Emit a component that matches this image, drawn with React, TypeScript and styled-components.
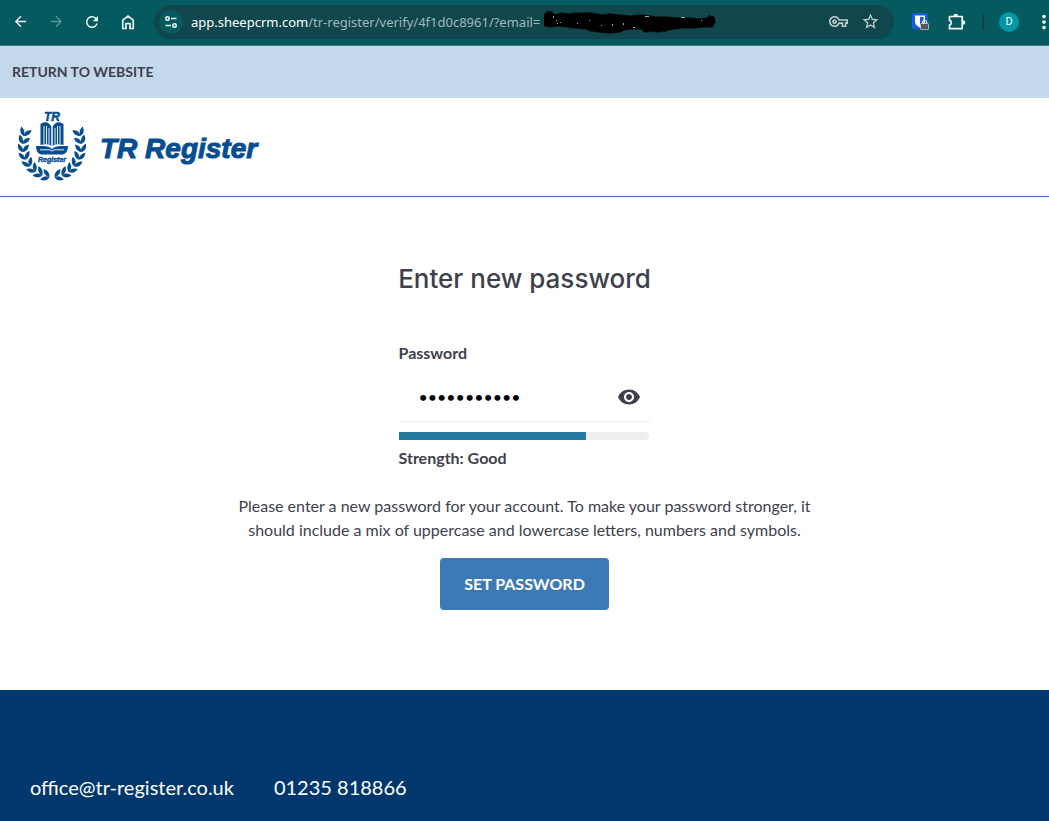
import React, { useState } from "react";
import styled, { createGlobalStyle } from "styled-components";
import {
  MdArrowBack,
  MdArrowForward,
  MdMoreVert,
  MdOutlineVpnKey,
  MdRefresh,
  MdRemoveRedEye,
  MdStarBorder,
} from "react-icons/md";

const Global = createGlobalStyle`
  *, *::before, *::after { box-sizing: border-box; }
  html, body, #root { margin: 0; min-height: 100%; }
  body {
    font-family: Lato, "Liberation Sans", sans-serif;
    font-size: 16px;
    line-height: 24px;
    color: #403f4c;
    background: #fff;
  }
`;

const Page = styled.div`
  min-height: 100vh;
  display: flex;
  flex-direction: column;
  overflow-x: hidden;
`;

/* ---------- browser toolbar ---------- */

const Toolbar = styled.div`
  display: flex;
  align-items: center;
  height: 46px;
  padding: 0 0 2px 8px;
  background: #045a5f;
  border-bottom: 1px solid #3f7f87;
`;

const NavGroup = styled.div`
  display: flex;
  align-items: center;
  gap: 12px;
  margin-right: 14px;
`;

const IconButton = styled.button<{ $dim?: boolean; $size?: number }>`
  display: flex;
  align-items: center;
  justify-content: center;
  flex: none;
  width: ${(p) => p.$size ?? 24}px;
  height: 24px;
  padding: 0;
  border: 0;
  background: none;
  color: ${(p) => (p.$dim ? "#5a9296" : "#e9f3f3")};
`;

const AddressBar = styled.div`
  flex: 1;
  min-width: 0;
  display: flex;
  align-items: center;
  height: 34px;
  padding: 0 12px 0 5px;
  border-radius: 17px;
  background: #10474d;
`;

const SiteInfo = styled(IconButton)`
  height: 24px;
  border-radius: 12px;
  background: #045a5f;
`;

const Url = styled.div`
  flex: 1;
  min-width: 0;
  display: flex;
  align-items: center;
  margin-left: 8px;
  overflow: hidden;
  white-space: nowrap;
  font-family: "Noto Sans", "Open Sans", sans-serif;
  font-size: 13px;
  line-height: 24px;
  color: #9fb9bb;
`;

const Host = styled.span`
  color: #fff;
`;

const AddressActions = styled.div`
  display: flex;
  gap: 8px;
`;

const AddressAction = styled(IconButton)`
  color: #c3cccd;
`;

const Extensions = styled.div`
  display: flex;
  align-items: center;
  gap: 12px;
  margin-left: 14px;
`;

const Divider = styled.span`
  width: 2px;
  height: 16px;
  margin: 0 3px 0 2px;
  background: #0b4247;
`;

const Avatar = styled.button`
  width: 20px;
  height: 20px;
  padding: 0;
  border: 0;
  border-radius: 50%;
  background: #0097a7;
  color: #fff;
  font: 11px/20px Roboto, sans-serif;
`;

const MenuButton = styled(IconButton)`
  margin-right: -8px;
`;

/* ---------- site ---------- */

const ReturnBar = styled.nav`
  display: flex;
  align-items: center;
  height: 52px;
  padding: 0 12px;
  background: #c4d8ec;
`;

const ReturnLink = styled.a`
  font-size: 14px;
  font-weight: 700;
  color: #403f4c;
  text-decoration: none;
`;

const Header = styled.header`
  display: flex;
  align-items: center;
  height: 99px;
  padding: 0 16px;
  border-bottom: 1px solid #3d7ab3;
`;

const Brand = styled.a`
  display: flex;
  align-items: center;
  gap: 12px;
  color: #074d92;
  text-decoration: none;
`;

const BrandName = styled.span`
  padding-top: 4px;
  font: italic 700 28px/32px "Liberation Sans", Arial, sans-serif;
  -webkit-text-stroke: 1px #074d92;
`;

const Main = styled.main`
  display: flex;
  flex-direction: column;
  align-items: center;
  padding: 64px 20px 80px;
`;

const Title = styled.h1`
  margin: 0;
  font: 500 26px/36px Inter, sans-serif;
  color: #403f4c;
`;

const Form = styled.form`
  display: flex;
  flex-direction: column;
  align-items: center;
  margin-top: 44px;
`;

const Field = styled.div`
  width: 252px;
`;

const Label = styled.label`
  display: block;
  font-weight: 700;
`;

const PasswordBox = styled.div`
  display: flex;
  align-items: center;
  height: 49px;
  margin-top: 8px;
  padding: 0 10px 0 20px;
  border-bottom: 1px solid #e8eef4;
  border-radius: 4px;
`;

const PasswordInput = styled.input`
  flex: 1;
  min-width: 0;
  padding: 0;
  border: 0;
  outline: 0;
  background: none;
  font: 16px/24px Lato, sans-serif;
  color: #000;
`;

const EyeButton = styled(IconButton)`
  color: #403f4c;
`;

const Meter = styled.div`
  width: 250px;
  height: 8px;
  margin-top: 10px;
  border-radius: 0 4px 4px 0;
  background: #eee;
  overflow: hidden;
`;

const MeterFill = styled.div`
  height: 100%;
  background: #24799e;
`;

const Strength = styled.p`
  margin: 6px 0 0;
  font-weight: 700;
`;

const Hint = styled.p`
  max-width: 580px;
  margin: 24px 0 0;
  text-align: center;
`;

const Submit = styled.button`
  height: 52px;
  margin-top: 16px;
  padding: 0 24px;
  border: 0;
  border-radius: 4px;
  background: #3d7ab5;
  color: #fff;
  font: 700 16px/24px Lato, sans-serif;
`;

const Footer = styled.footer`
  flex: 1;
  display: flex;
  gap: 40px;
  padding: 83px 30px 20px;
  background: #00386e;
`;

const FooterLink = styled.a`
  font-size: 20px;
  line-height: 28px;
  color: #fff;
  text-decoration: none;
`;

/* ---------- drawings ---------- */

const HomeIcon = () => (
  <svg width="16" height="16" viewBox="0 0 16 16" fill="none" stroke="currentColor" strokeWidth="1.7">
    <path d="M2.8 6.2 8 2l5.200 4.200V14.500H10V9.500H6v5H2.800z" />
  </svg>
);

const TuneIcon = () => (
  <svg width="14" height="14" viewBox="0 0 14 14" fill="none" stroke="#e9f3f3" strokeWidth="1.6">
    <circle cx="3.500" cy="3.500" r="1.700" />
    <path d="M7 3.500h5.500M1.500 10.500H7" />
    <circle cx="10.500" cy="10.500" r="1.700" />
  </svg>
);

const PuzzleIcon = () => (
  <svg width="20" height="20" viewBox="0 0 20 20" fill="none" stroke="#f3f8f8" strokeWidth="1.700" strokeLinejoin="round">
    <path d="M3.500 4.500h12.700v12.200H3.500v-3.800a2.300 2.300 0 0 0 0-4.500z" />
    <path d="M7.400 4a2.300 2.300 0 0 1 4.600 0zM17 8.200a2.300 2.300 0 0 1 0 4.600z" fill="#f3f8f8" stroke="none" />
  </svg>
);

const ShieldIcon = () => (
  <svg width="17" height="17" viewBox="0 0 17 17">
    <rect width="16" height="16" rx="1.500" fill="#175ddc" />
    <path d="M3 2.500h10v6.200c0 3-3 4.800-5 5.800-2-1-5-2.800-5-5.800z" fill="#fff" />
    <path d="M8 4h3.600v4.700c0 1.900-2 3.200-3.600 4.100z" fill="#175ddc" />
    <rect x="8.500" y="10.500" width="8" height="6.200" rx="1" fill="#555" stroke="#e8e8e8" strokeWidth=".7" />
    <path d="M10.500 10.500V9.300a2 2 0 0 1 4 0v1.200" fill="none" stroke="#ddd" strokeWidth="1.100" />
  </svg>
);

const RedactionMark = styled.svg`
  flex: none;
  margin-left: 4px;
`;

const Redaction = () => (
  <RedactionMark width="180" height="24" viewBox="0 0 180 24">
    <path
      d="M1 4 4 1.500 8 2l2 3 8-2 7 1 6-1 16 0 6 1 5 1 8-1 9 1 10 1 14-1 13 2 10 0 12 1 12 0 10 1 7-1 2-2 5 1 1 5-3 5-10 0-8 1-12 0-9 1-8 2-7 1-6-1-7 1-4-3-9 0-8 1-5 2-9 1-11-1-8-1-5-2-11-1-8-1-9-1-8 1-9-2-4 1-6-1z"
      fill="#000"
      stroke="#000"
      strokeWidth="1.500"
      strokeDasharray="2 1"
    />
    <path
      d="M9 6h1v2H9zM12 10h1v1h-1zM13 13h1v1h-1zM16 12h1v1h-1zM33 13h1v1h-1zM45 10h1v1h-1zM57 15h1v1h-1zM68 14h1v2h-1zM79 13h1v2h-1zM89 17h2v1h-2zM101 6h4v1h-4zM137 7h4v1h-4zM157 10h1v1h-1z"
      fill="#8fb0b0"
    />
  </RedactionMark>
);

/* Leaf pairs climb each side of the wreath from the foot of the crest. */
const LEAVES = Array.from({ length: 8 }, (_, i) => {
  const angle = 5 + i * 15;
  const rad = (angle * Math.PI) / 180;
  const r = 28 + i * 0.3;
  return {
    x: 36 - r * Math.sin(rad),
    y: 38 + r * Math.cos(rad) - i * 0.4,
    turn: Math.min(angle, 96) - 180,
  };
});

const LEAF = "M0 0C3 -2.900 6 -3 9.800 0C6 2.400 3 2.200 0 0z";

const Branch = () => (
  <>
    {LEAVES.map((leaf, i) => (
      <g key={i} transform={`translate(${leaf.x} ${leaf.y}) rotate(${leaf.turn})`}>
        <path d={LEAF} transform="rotate(48)" />
        <path d={LEAF} transform="rotate(-20)" />
      </g>
    ))}
  </>
);

const Crest = () => (
  <svg width="72" height="72" viewBox="0 0 72 72" fill="#074d92" aria-hidden="true">
    <Branch />
    <g transform="translate(72 0) scale(-1 1)">
      <Branch />
    </g>
    <g fontFamily="Liberation Sans, Arial, sans-serif" fontWeight="700" fontStyle="italic" textAnchor="middle" stroke="#074d92">
      <text x="36" y="10" fontSize="12" strokeWidth=".5">TR</text>
      <text x="36" y="51" fontSize="7" strokeWidth=".4">Register</text>
    </g>
    <path d="M24.500 13c4-3 9-2 11 3v19c-3-2-7-2-11-1z" />
    <path d="M47.500 13c-4-3-9-2-11 3v19c3-2 7-2 11-1z" />
    <path
      d="M28 15v18M30.500 15v18.500M33 17v17M39 17v17M41.500 15v18.500M44 15v18"
      fill="none"
      stroke="#fff"
      strokeWidth=".9"
    />
    <path d="M20 35h7c4 0 7 1 9 3 2-2 5-3 9-3h7c0 4-1.500 7.500-5 8.500H25c-3.500-1-5-4.500-5-8.500z" />
    <path d="M24 38.800h9.500l2.500 1.200 2.500-1.200H48M36 15v21" fill="none" stroke="#fff" strokeWidth=".9" />
  </svg>
);

export default function App() {
  const [password, setPassword] = useState("Qw7!mp2zLk9");
  const [visible, setVisible] = useState(false);
  const strength = 75;

  return (
    <>
      <Global />
      <Page>
        <Toolbar>
          <NavGroup>
            <IconButton aria-label="Back"><MdArrowBack size={17} /></IconButton>
            <IconButton aria-label="Forward" $dim><MdArrowForward size={17} /></IconButton>
            <IconButton aria-label="Reload"><MdRefresh size={18} /></IconButton>
            <IconButton aria-label="Home"><HomeIcon /></IconButton>
          </NavGroup>
          <AddressBar>
            <SiteInfo aria-label="Site information"><TuneIcon /></SiteInfo>
            <Url>
              <Host>app.sheepcrm.com</Host>
              <span>/tr-register/verify/4f1d0c8961/?email=</span>
              <Redaction />
            </Url>
            <AddressActions>
              <AddressAction aria-label="Passwords"><MdOutlineVpnKey size={19} /></AddressAction>
              <AddressAction aria-label="Bookmark"><MdStarBorder size={19} /></AddressAction>
            </AddressActions>
          </AddressBar>
          <Extensions>
            <IconButton aria-label="Password manager"><ShieldIcon /></IconButton>
            <IconButton aria-label="Extensions"><PuzzleIcon /></IconButton>
            <Divider />
            <Avatar aria-label="Profile D">D</Avatar>
            <MenuButton aria-label="Menu" $size={26}><MdMoreVert size={22} /></MenuButton>
          </Extensions>
        </Toolbar>

        <ReturnBar>
          <ReturnLink href="#">RETURN TO WEBSITE</ReturnLink>
        </ReturnBar>

        <Header>
          <Brand href="#">
            <Crest />
            <BrandName>TR Register</BrandName>
          </Brand>
        </Header>

        <Main>
          <Title>Enter new password</Title>
          <Form onSubmit={(e) => e.preventDefault()}>
            <Field>
              <Label htmlFor="password">Password</Label>
              <PasswordBox>
                <PasswordInput
                  id="password"
                  type={visible ? "text" : "password"}
                  value={password}
                  onChange={(e) => setPassword(e.target.value)}
                />
                <EyeButton type="button" aria-label="Show password" onClick={() => setVisible(!visible)}>
                  <MdRemoveRedEye size={24} />
                </EyeButton>
              </PasswordBox>
              <Meter>
                <MeterFill style={{ width: `${strength}%` }} />
              </Meter>
              <Strength>Strength: Good</Strength>
            </Field>
            <Hint>
              Please enter a new password for your account. To make your password stronger, it
              should include a mix of uppercase and lowercase letters, numbers and symbols.
            </Hint>
            <Submit type="submit">SET PASSWORD</Submit>
          </Form>
        </Main>

        <Footer>
          <FooterLink href="mailto:office@tr-register.co.uk">office@tr-register.co.uk</FooterLink>
          <FooterLink href="tel:01235818866">01235 818866</FooterLink>
        </Footer>
      </Page>
    </>
  );
}
